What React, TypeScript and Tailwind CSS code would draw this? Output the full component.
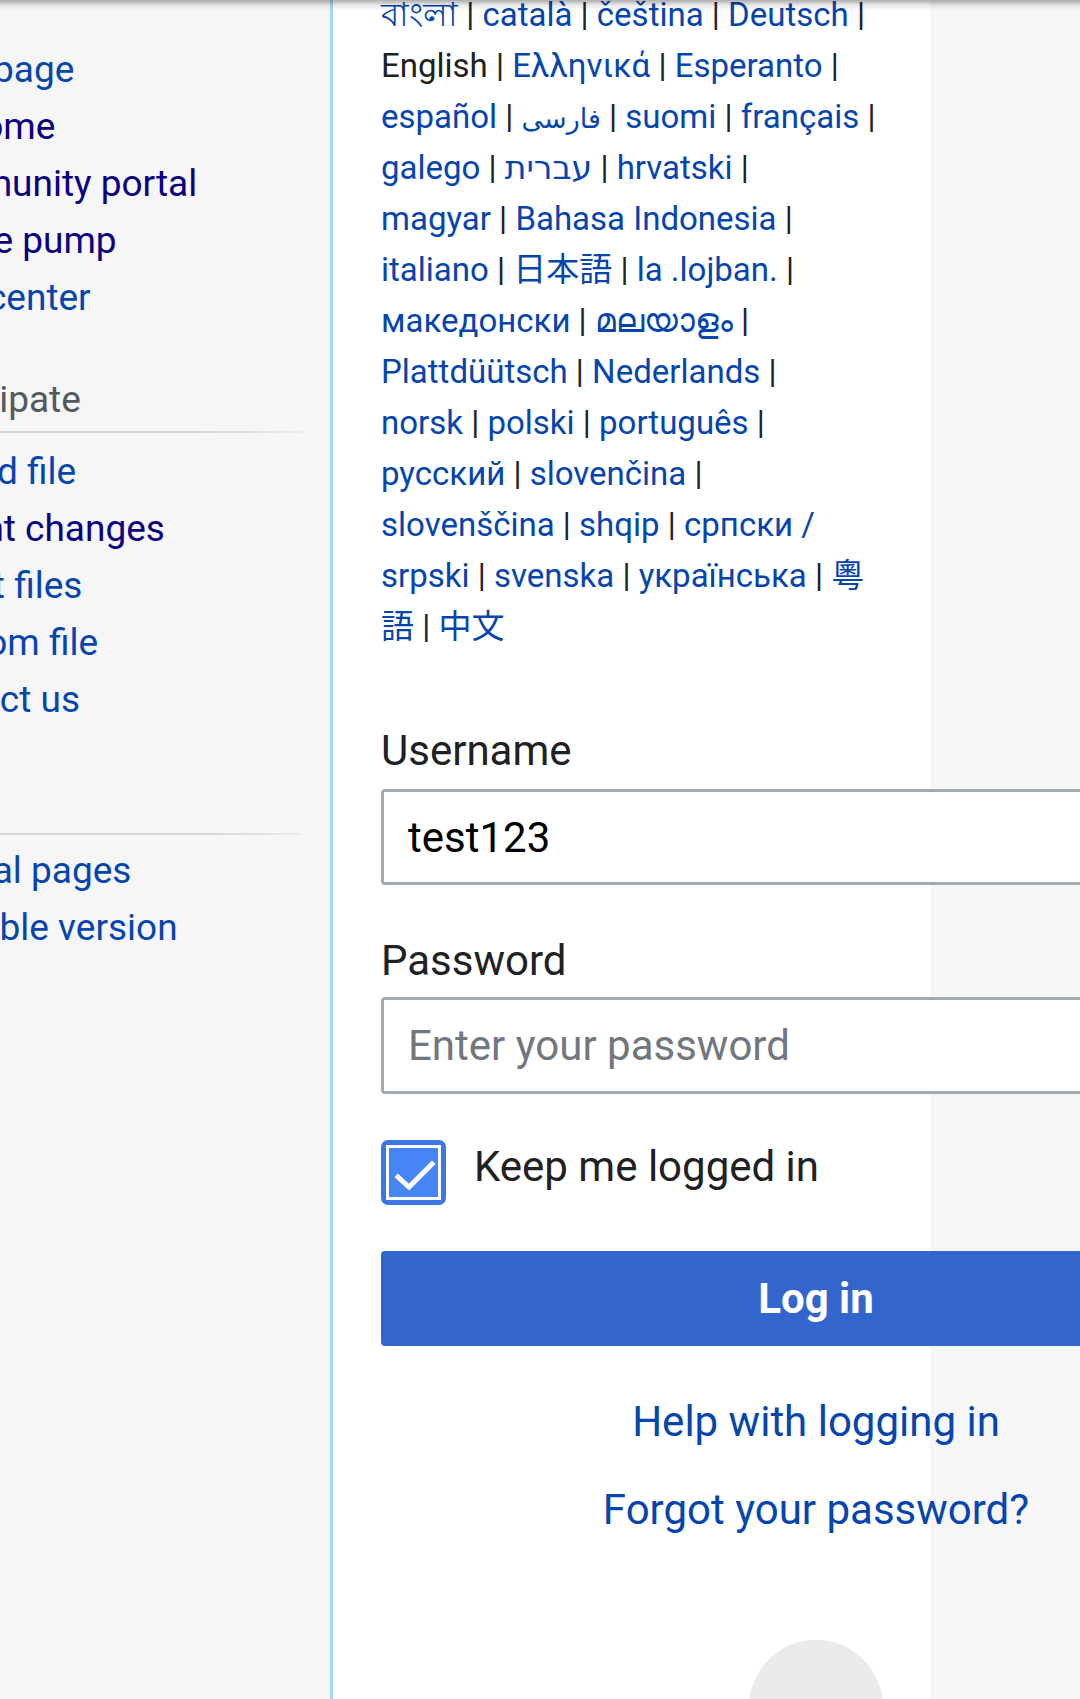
import React from "react";

function L({ children, dir, className }: { children: React.ReactNode; dir?: "rtl" | "ltr"; className?: string }) {
  return (
    <span dir={dir} className={`text-[#0645ad] ${className ?? ""}`}>
      {children}
    </span>
  );
}

function S() {
  return <span className="text-[#202122]">{" | "}</span>;
}

function Line({ children }: { children: React.ReactNode }) {
  return <div className="h-[51px] leading-[51px]">{children}</div>;
}

type NavItem = { label: string; visited?: boolean };

function NavList({ items }: { items: NavItem[] }) {
  return (
    <ul>
      {items.map((it) => (
        <li
          key={it.label}
          className={`leading-[57px] whitespace-nowrap ${it.visited ? "text-[#0b0080]" : "text-[#0645ad]"}`}
        >
          {it.label}
        </li>
      ))}
    </ul>
  );
}

function Portal({
  heading,
  items,
  className,
  listClassName,
}: {
  heading: string;
  items: NavItem[];
  className: string;
  listClassName: string;
}) {
  return (
    <div className={className}>
      <h3 className="leading-[57px] text-[#54595d] whitespace-nowrap">{heading}</h3>
      <div className="mt-[3px] h-[2px] w-[400px] bg-linear-to-r from-[#d5d5d5] via-[#d5d5d5] via-75% to-[#ececec]" />
      <div className={listClassName}>
        <NavList items={items} />
      </div>
    </div>
  );
}

export default function App() {
  return (
    <div className="relative flex h-[1699px] w-[1080px] overflow-hidden bg-[#f6f6f6] font-['Roboto','Noto_Sans_CJK_JP','DejaVu_Sans',sans-serif]">
      {/* Sidebar */}
      <aside className="h-full w-[333px] shrink-0 overflow-hidden border-r-[3px] border-[#a7d7f9] bg-[#f6f6f6]">
        <nav className="-ml-[98px] w-[400px] pt-[41px] text-[37px]">
          <NavList
            items={[
              { label: "Main page" },
              { label: "Welcome", visited: true },
              { label: "Community portal", visited: true },
              { label: "Village pump", visited: true },
              { label: "Help center" },
            ]}
          />
          <Portal
            className="mt-[45px]"
            listClassName="mt-[10px]"
            heading="Participate"
            items={[
              { label: "Upload file" },
              { label: "Recent changes", visited: true },
              { label: "Latest files" },
              { label: "Random file" },
              { label: "Contact us" },
            ]}
          />
          <Portal
            className="mt-[45px]"
            listClassName="mt-[7px]"
            heading="Tools"
            items={[{ label: "Special pages" }, { label: "Printable version" }]}
          />
        </nav>
      </aside>

      {/* Main content */}
      <main className="w-[597px] shrink-0 bg-white pl-[48px]">
        <div className="-mt-[11px] whitespace-nowrap text-[33px] text-[#202122]">
          <Line>
            <L>বাংলা</L>
            <S />
            <L>català</L>
            <S />
            <L>čeština</L>
            <S />
            <L>Deutsch</L>
            <S />
          </Line>
          <Line>
            <span>English</span>
            <S />
            <L>Ελληνικά</L>
            <S />
            <L>Esperanto</L>
            <S />
          </Line>
          <Line>
            <L>español</L>
            <S />
            <L dir="rtl" className="text-[27px] leading-none">
              فارسی
            </L>
            <S />
            <L>suomi</L>
            <S />
            <L>français</L>
            <S />
          </Line>
          <Line>
            <L>galego</L>
            <S />
            <L dir="rtl">עברית</L>
            <S />
            <L>hrvatski</L>
            <S />
          </Line>
          <Line>
            <L>magyar</L>
            <S />
            <L>Bahasa Indonesia</L>
            <S />
          </Line>
          <Line>
            <L>italiano</L>
            <S />
            <L>日本語</L>
            <S />
            <L>la .lojban.</L>
            <S />
          </Line>
          <Line>
            <L>македонски</L>
            <S />
            <L>മലയാളം</L>
            <S />
          </Line>
          <Line>
            <L>Plattdüütsch</L>
            <S />
            <L>Nederlands</L>
            <S />
          </Line>
          <Line>
            <L>norsk</L>
            <S />
            <L>polski</L>
            <S />
            <L>português</L>
            <S />
          </Line>
          <Line>
            <L>русский</L>
            <S />
            <L>slovenčina</L>
            <S />
          </Line>
          <Line>
            <L>slovenščina</L>
            <S />
            <L>shqip</L>
            <S />
            <L>српски /</L>
          </Line>
          <Line>
            <L>srpski</L>
            <S />
            <L>svenska</L>
            <S />
            <L>українська</L>
            <S />
            <L>粵</L>
          </Line>
          <Line>
            <L>語</L>
            <S />
            <L>中文</L>
          </Line>
        </div>

        <form className="w-[870px] text-[42px] text-[#202122]" onSubmit={(e) => e.preventDefault()}>
          <label htmlFor="u" className="mt-[74px] block leading-[50px]">
            Username
          </label>
          <input
            id="u"
            className="mt-[13px] block h-[96px] w-full rounded-[4px] border-[3px] border-[#a2a9b1] bg-white px-[24px] text-[42px] text-black outline-none"
            defaultValue="test123"
          />
          <label htmlFor="p" className="mt-[51px] block leading-[50px]">
            Password
          </label>
          <input
            id="p"
            type="password"
            placeholder="Enter your password"
            className="mt-[11px] block h-[97px] w-full rounded-[4px] border-[3px] border-[#a2a9b1] bg-white px-[24px] text-[42px] text-black outline-none placeholder:text-[#72777d]"
          />
          <div className="mt-[46px] flex items-start gap-[28px]">
            <div className="relative size-[65px] shrink-0 rounded-[7px] bg-[#3d76e6] p-[5px]">
              <div className="size-full border-[3px] border-white bg-[#4885f4]" />
              <svg viewBox="0 0 65 65" className="absolute inset-0 size-full">
                <path d="M17 37 L28 47 L51 24" fill="none" stroke="white" strokeWidth="5" strokeLinecap="square" />
              </svg>
            </div>
            <span className="leading-[54px]">Keep me logged in</span>
          </div>
          <button
            type="submit"
            className="mt-[46px] block h-[95px] w-full rounded-[4px] bg-[#3366cc] text-[42px] font-bold text-white"
          >
            Log in
          </button>
          <div className="mt-[51px] text-center leading-[50px] text-[#0645ad]">Help with logging in</div>
          <div className="mt-[38px] text-center leading-[50px] text-[#0645ad]">Forgot your password?</div>
          <div className="mx-auto mt-[105px] size-[134px] rounded-full bg-[#eaeaea]" />
        </form>
      </main>

      {/* Top header shadow */}
      <div className="pointer-events-none absolute inset-x-0 top-0 h-[11px] bg-linear-to-b from-[rgba(0,0,0,0.32)] via-[rgba(0,0,0,0.08)] to-transparent" />
    </div>
  );
}
